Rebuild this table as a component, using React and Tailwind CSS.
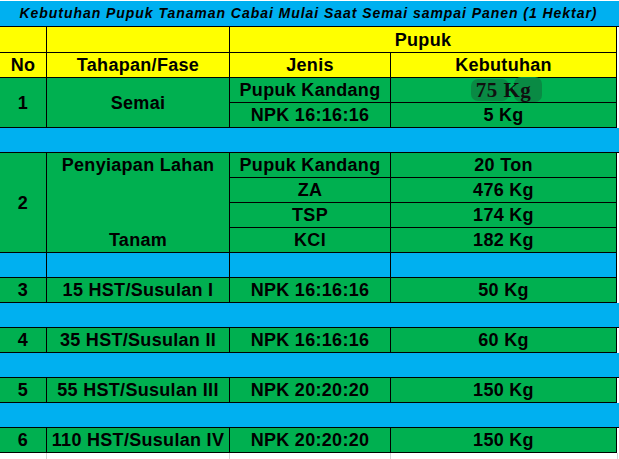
import React from 'react';

const cell = "flex items-center justify-center border-r border-b border-black";
const green = "bg-[#00b050]";
const blue = "bg-[#00b0f0]";
const yellow = "bg-[#ffff00]";

function Row({ no, fase, jenis, butuh }) {
  return (
    <>
      <div className={`${cell} ${green}`}>{no}</div>
      <div className={`${cell} ${green}`}>{fase}</div>
      <div className={`${cell} ${green}`}>{jenis}</div>
      <div className={`${cell} ${green}`}>{butuh}</div>
    </>
  );
}

function Gap() {
  return <div className={`col-span-4 border-b border-black ${blue} -mr-[2px]`}></div>;
}

export default function App() {
  return (
    <div className="w-[619px] h-[459px] bg-white pt-px overflow-hidden font-['Liberation_Sans',Arial,sans-serif] font-bold text-black">
      {/* Title band */}
      <div className={`h-[26px] w-[619px] border-b border-black ${blue} flex items-center justify-center pr-[2px]`}>
        <span className="italic text-[14px] tracking-[0.95px]">
          Kebutuhan Pupuk Tanaman Cabai Mulai Saat Semai sampai Panen (1 Hektar)
        </span>
      </div>

      <div className="grid grid-cols-[47px_183px_161px_226px] grid-rows-[26px_repeat(16,25px)] text-[18px] leading-none tracking-[0.3px]">
        {/* header */}
        <div className={`${cell} ${yellow}`}></div>
        <div className={`${cell} ${yellow}`}></div>
        <div className={`${cell} ${yellow} col-span-2`}>Pupuk</div>
        <div className={`${cell} ${yellow}`}>No</div>
        <div className={`${cell} ${yellow}`}>Tahapan/Fase</div>
        <div className={`${cell} ${yellow}`}>Jenis</div>
        <div className={`${cell} ${yellow}`}>Kebutuhan</div>

        {/* 1 */}
        <div className={`${cell} ${green} row-span-2`}>1</div>
        <div className={`${cell} ${green} row-span-2`}>Semai</div>
        <div className={`${cell} ${green}`}>Pupuk Kandang</div>
        <div className={`${cell} ${green}`}>
          <span className="relative font-['Liberation_Serif','Times_New_Roman',serif] text-[21px] tracking-[0.5px] text-[#101010]">
            <span className="absolute left-[-5px] top-[-1px] w-[38px] h-[22px] rounded-[7px] bg-[#098a44]"></span>
            <span className="absolute left-[38px] top-[-3px] w-[28px] h-[25px] rounded-[7px] bg-[#098a44]"></span>
            <span className="relative">75 Kg</span>
          </span>
        </div>
        <div className={`${cell} ${green}`}>NPK 16:16:16</div>
        <div className={`${cell} ${green}`}>5 Kg</div>

        <Gap />

        {/* 2 */}
        <div className={`${cell} ${green} row-span-4`}>2</div>
        <div className={`row-span-4 flex flex-col justify-between border-r border-b border-black ${green}`}>
          <div className="h-[24px] flex items-center justify-center">Penyiapan Lahan</div>
          <div className="h-[24px] flex items-center justify-center">Tanam</div>
        </div>
        <div className={`${cell} ${green}`}>Pupuk Kandang</div>
        <div className={`${cell} ${green}`}>20 Ton</div>
        <div className={`${cell} ${green}`}>ZA</div>
        <div className={`${cell} ${green}`}>476 Kg</div>
        <div className={`${cell} ${green}`}>TSP</div>
        <div className={`${cell} ${green}`}>174 Kg</div>
        <div className={`${cell} ${green}`}>KCl</div>
        <div className={`${cell} ${green}`}>182 Kg</div>

        <div className={`${cell} ${blue}`}></div>
        <div className={`${cell} ${blue}`}></div>
        <div className={`${cell} ${blue}`}></div>
        <div className={`${cell} ${blue}`}></div>

        <Row no="3" fase="15 HST/Susulan I" jenis="NPK 16:16:16" butuh="50 Kg" />
        <Gap />
        <Row no="4" fase="35 HST/Susulan II" jenis="NPK 16:16:16" butuh="60 Kg" />
        <Gap />
        <Row no="5" fase="55 HST/Susulan III" jenis="NPK 20:20:20" butuh="150 Kg" />
        <Gap />
        <Row no="6" fase="110 HST/Susulan IV" jenis="NPK 20:20:20" butuh="150 Kg" />
      </div>

      {/* sheet gridlines below the table */}
      <div className="flex h-[10px]">
        <div className="w-[47px] border-r border-[#d4d4d4]"></div>
        <div className="w-[183px] border-r border-[#d4d4d4]"></div>
        <div className="w-[161px] border-r border-[#d4d4d4]"></div>
        <div className="w-[227px] border-r border-[#d4d4d4]"></div>
      </div>
    </div>
  );
}
